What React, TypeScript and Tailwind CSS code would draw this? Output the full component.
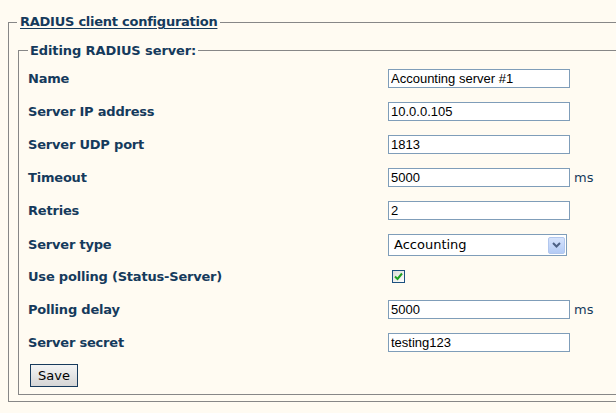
import { useState } from 'react'

const labelFont = { fontFamily: '"DejaVu Sans", Verdana, sans-serif' }

function TextRow({ label, value, unit }: { label: string; value: string; unit?: string }) {
  return (
    <div className="flex items-center h-[19px] mb-[14px]">
      <div className="w-[360px] text-[13px] font-bold tracking-[-0.2px] text-[#153a5c]" style={labelFont}>
        {label}
      </div>
      <input
        readOnly
        value={value}
        className="w-[182px] h-[19px] border border-[#7f9db9] bg-white px-[2px] text-[13px] text-black font-['Liberation_Sans',Arial,sans-serif] outline-none"
      />
      {unit && (
        <span className="ml-[4px] text-[13px] text-[#153a5c] font-['DejaVu_Sans',Verdana,sans-serif]">
          {unit}
        </span>
      )}
    </div>
  )
}

function SelectRow() {
  return (
    <div className="flex items-center h-[22px] mb-[11px]">
      <div className="w-[360px] text-[13px] font-bold tracking-[-0.2px] text-[#153a5c]" style={labelFont}>
        Server type
      </div>
      <div className="flex items-center w-[179px] h-[22px] border border-[#7f9db9] bg-white pl-[5px] pr-[1px]">
        <span className="flex-1 text-[13px] text-black font-['DejaVu_Sans',Tahoma,sans-serif]">Accounting</span>
        <span className="flex items-center justify-center w-[17px] h-[17px] rounded-[2px] border border-[#b2c7ee] bg-gradient-to-b from-[#d6e3fc] to-[#b4cbf5]">
          <svg width="9" height="6" viewBox="0 0 9 6">
            <path d="M1 1 L4.5 4.5 L8 1" fill="none" stroke="#4d6185" strokeWidth="2" />
          </svg>
        </span>
      </div>
    </div>
  )
}

function CheckRow() {
  const [on, setOn] = useState(true)
  return (
    <div className="flex items-center h-[19px] mb-[14px]">
      <div className="w-[360px] text-[13px] font-bold tracking-[-0.2px] text-[#153a5c]" style={labelFont}>
        Use polling (Status-Server)
      </div>
      <button
        onClick={() => setOn(!on)}
        className="ml-[4px] flex items-center justify-center w-[13px] h-[13px] border border-[#1c5180] bg-gradient-to-br from-[#dcdcd7] to-white"
      >
        {on && (
          <svg width="9" height="9" viewBox="0 0 9 9">
            <path d="M1 4.5 L3.5 7 L8 1.5" fill="none" stroke="#21a121" strokeWidth="2" />
          </svg>
        )}
      </button>
    </div>
  )
}

export default function App() {
  return (
    <div className="min-h-[413px] w-[616px] overflow-hidden bg-[#fffbf2] pt-[13px] pl-[8px]">
      <fieldset className="w-[700px] border border-[#878787] pl-[9px] pb-[6px] pt-[11px]">
        <legend
          className="-ml-px px-[3px] text-[13px] leading-[18px] font-bold tracking-[-0.25px] text-[#153a5c] underline underline-offset-2"
          style={labelFont}
        >
          RADIUS client configuration
        </legend>
        <fieldset className="border border-[#878787] pl-[9px] pt-[10px] pb-[7px]">
          <legend className="px-[2px] text-[13px] leading-[17px] font-bold tracking-[-0.1px] text-[#153a5c]" style={labelFont}>
            Editing RADIUS server:
          </legend>
          <TextRow label="Name" value="Accounting server #1" />
          <TextRow label="Server IP address" value="10.0.0.105" />
          <TextRow label="Server UDP port" value="1813" />
          <TextRow label="Timeout" value="5000" unit="ms" />
          <TextRow label="Retries" value="2" />
          <SelectRow />
          <CheckRow />
          <TextRow label="Polling delay" value="5000" unit="ms" />
          <TextRow label="Server secret" value="testing123" />
          <button className="block -mt-[2px] ml-[2px] w-[48px] h-[23px] border border-[#173a5c] bg-gradient-to-b from-[#f4f4f4] to-[#d6d6d6] text-[13px] text-black font-['DejaVu_Sans',Tahoma,sans-serif]">
            Save
          </button>
        </fieldset>
      </fieldset>
    </div>
  )
}
